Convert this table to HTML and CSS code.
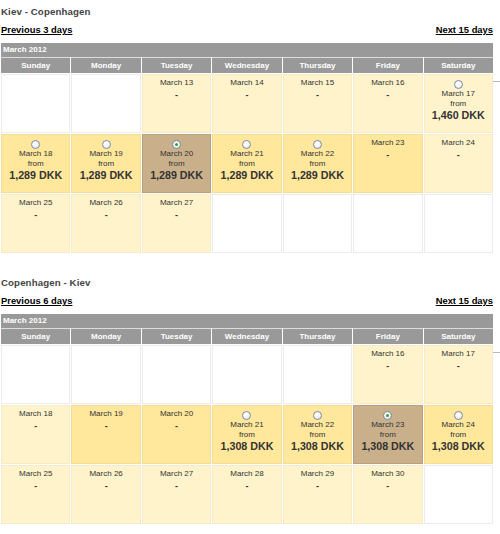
FILE: index.html
```html
<!DOCTYPE html>
<html>
<head>
<meta charset="utf-8">
<link rel="stylesheet" href="styles.css">
</head>
<body>
<div class="page">
  <section class="leg">
    <h2 class="route">Kiev - Copenhagen</h2>
    <div class="nav"><a href="#">Previous 3 days</a><a href="#">Next 15 days</a></div>
    <div class="cal">
      <div class="month">March 2012</div>
      <div class="dow">Sunday</div><div class="dow">Monday</div><div class="dow">Tuesday</div><div class="dow">Wednesday</div><div class="dow">Thursday</div><div class="dow">Friday</div><div class="dow">Saturday</div>

      <div class="day empty"></div>
      <div class="day empty"></div>
      <div class="day pale"><div class="date">March 13</div><div class="dash">-</div></div>
      <div class="day pale"><div class="date">March 14</div><div class="dash">-</div></div>
      <div class="day pale"><div class="date">March 15</div><div class="dash">-</div></div>
      <div class="day pale"><div class="date">March 16</div><div class="dash">-</div></div>
      <div class="day pale priced"><span class="radio"></span><div class="date">March 17</div><div class="from">from</div><div class="price">1,460 DKK</div></div>

      <div class="day rich priced"><span class="radio"></span><div class="date">March 18</div><div class="from">from</div><div class="price">1,289 DKK</div></div>
      <div class="day rich priced"><span class="radio"></span><div class="date">March 19</div><div class="from">from</div><div class="price">1,289 DKK</div></div>
      <div class="day sel priced"><span class="radio on"></span><div class="date">March 20</div><div class="from">from</div><div class="price">1,289 DKK</div></div>
      <div class="day rich priced"><span class="radio"></span><div class="date">March 21</div><div class="from">from</div><div class="price">1,289 DKK</div></div>
      <div class="day rich priced"><span class="radio"></span><div class="date">March 22</div><div class="from">from</div><div class="price">1,289 DKK</div></div>
      <div class="day rich"><div class="date">March 23</div><div class="dash">-</div></div>
      <div class="day pale"><div class="date">March 24</div><div class="dash">-</div></div>

      <div class="day pale"><div class="date">March 25</div><div class="dash">-</div></div>
      <div class="day pale"><div class="date">March 26</div><div class="dash">-</div></div>
      <div class="day pale"><div class="date">March 27</div><div class="dash">-</div></div>
      <div class="day empty"></div>
      <div class="day empty"></div>
      <div class="day empty"></div>
      <div class="day empty"></div>
    </div>
  </section>

  <section class="leg">
    <h2 class="route">Copenhagen - Kiev</h2>
    <div class="nav"><a href="#">Previous 6 days</a><a href="#">Next 15 days</a></div>
    <div class="cal">
      <div class="month">March 2012</div>
      <div class="dow">Sunday</div><div class="dow">Monday</div><div class="dow">Tuesday</div><div class="dow">Wednesday</div><div class="dow">Thursday</div><div class="dow">Friday</div><div class="dow">Saturday</div>

      <div class="day empty"></div>
      <div class="day empty"></div>
      <div class="day empty"></div>
      <div class="day empty"></div>
      <div class="day empty"></div>
      <div class="day pale"><div class="date">March 16</div><div class="dash">-</div></div>
      <div class="day pale"><div class="date">March 17</div><div class="dash">-</div></div>

      <div class="day pale"><div class="date">March 18</div><div class="dash">-</div></div>
      <div class="day rich"><div class="date">March 19</div><div class="dash">-</div></div>
      <div class="day rich"><div class="date">March 20</div><div class="dash">-</div></div>
      <div class="day rich priced"><span class="radio"></span><div class="date">March 21</div><div class="from">from</div><div class="price">1,308 DKK</div></div>
      <div class="day rich priced"><span class="radio"></span><div class="date">March 22</div><div class="from">from</div><div class="price">1,308 DKK</div></div>
      <div class="day sel priced"><span class="radio on"></span><div class="date">March 23</div><div class="from">from</div><div class="price">1,308 DKK</div></div>
      <div class="day rich priced"><span class="radio"></span><div class="date">March 24</div><div class="from">from</div><div class="price">1,308 DKK</div></div>

      <div class="day pale"><div class="date">March 25</div><div class="dash">-</div></div>
      <div class="day pale"><div class="date">March 26</div><div class="dash">-</div></div>
      <div class="day pale"><div class="date">March 27</div><div class="dash">-</div></div>
      <div class="day pale"><div class="date">March 28</div><div class="dash">-</div></div>
      <div class="day pale"><div class="date">March 29</div><div class="dash">-</div></div>
      <div class="day pale"><div class="date">March 30</div><div class="dash">-</div></div>
      <div class="day empty"></div>
    </div>
  </section>
</div>
</body>
</html>
```

FILE: styles.css
```css
html, body {
  margin: 0;
  padding: 0;
  background: #ffffff;
}

body {
  font-family: "Liberation Sans", Arial, sans-serif;
  color: #333333;
}

.page {
  width: 492px;
  padding: 6px 0 0 1px;
}

.leg {
  margin-bottom: 24px;
}

.route {
  margin: 0;
  height: 12px;
  line-height: 12px;
  font-size: 9.7px;
  font-weight: bold;
  color: #444444;
  letter-spacing: 0.1px;
}

.nav {
  margin-top: 6px;
  height: 12px;
  line-height: 12px;
  display: flex;
  justify-content: space-between;
}

.nav a {
  color: #000000;
  font-size: 9.4px;
  font-weight: bold;
  text-decoration: underline;
}

.cal {
  position: relative;
  margin-top: 7px;
  display: grid;
  grid-template-columns: repeat(7, 1fr);
  gap: 1px;
  background: #ffffff;
}

.cal::after {
  content: "";
  position: absolute;
  right: -7px;
  top: 38px;
  width: 7px;
  height: 1px;
  background: #b8b8b8;
}

.month {
  grid-column: 1 / -1;
  height: 14px;
  line-height: 14px;
  background: #999999;
  color: #ffffff;
  font-size: 8px;
  font-weight: bold;
  padding-left: 2px;
}

.dow {
  height: 15px;
  line-height: 15px;
  background: #999999;
  color: #ffffff;
  font-size: 8px;
  font-weight: bold;
  text-align: center;
  box-shadow: 0 -1px 0 #dcdcdc;
}

.day {
  box-sizing: border-box;
  height: 59px;
  border: 1px solid #eeeeee;
  text-align: center;
  padding-top: 3px;
  color: #333333;
}

.day.empty {
  background: #ffffff;
  border-color: #ececec;
}

.day.pale {
  background: #fff3cb;
  border-color: #f6ebc8;
}

.day.rich {
  background: #ffe79c;
  border-color: #f2dc98;
}

.day.sel {
  background: #c9b08b;
  border-color: #b9a07c;
}

.day.priced {
  padding-top: 5px;
}

.radio {
  display: block;
  box-sizing: border-box;
  width: 9px;
  height: 9px;
  margin: 0 auto;
  border-radius: 50%;
  border: 1px solid #7d8ba3;
  background: radial-gradient(circle at 40% 35%, #ffffff 0%, #f1f3f7 55%, #d6dbe4 100%);
  position: relative;
}

.radio.on::after {
  content: "";
  position: absolute;
  left: 2px;
  top: 2px;
  width: 3px;
  height: 3px;
  border-radius: 50%;
  background: #2ea42e;
}

.date {
  font-size: 8px;
  line-height: 10px;
  height: 10px;
}

.dash {
  font-size: 9px;
  font-weight: bold;
  line-height: 14px;
  height: 14px;
}

.from {
  font-size: 8px;
  line-height: 10px;
  height: 10px;
}

.price {
  font-size: 10.7px;
  font-weight: bold;
  line-height: 13px;
  height: 13px;
}
```
